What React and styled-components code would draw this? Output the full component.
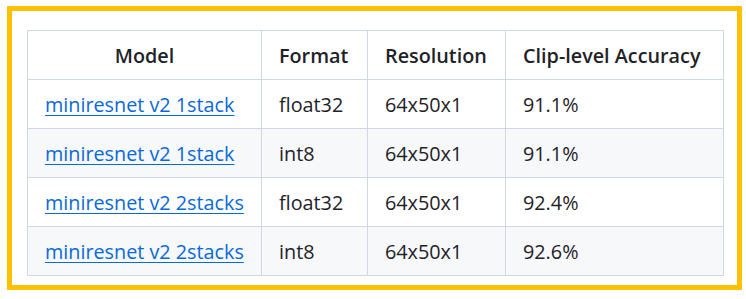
import React from 'react';
import styled, { createGlobalStyle } from 'styled-components';

const GlobalStyle = createGlobalStyle`
  body {
    margin: 0;
    background: #ffffff;
    font-family: "Open Sans", "Noto Sans", sans-serif;
  }
`;

const Frame = styled.div`
  box-sizing: border-box;
  width: 735px;
  height: 284px;
  margin: 6px 0 0 7px;
  border: 5px solid #ffc000;
  padding: 19px 15px 10px 15px;
  background: #ffffff;
`;

const Table = styled.table`
  border-collapse: collapse;
  table-layout: fixed;
  width: 696px;
  color: #1f2328;
  font-size: 19.8px;
`;

const Head = styled.th`
  height: 48px;
  padding: 0 17px;
  border: 1px solid #d0d7de;
  font-weight: 600;
  text-align: ${(p) => (p.center ? 'center' : 'left')};
  white-space: nowrap;
`;

const Row = styled.tr`
  background: ${(p) => (p.striped ? '#f6f8fa' : '#ffffff')};
`;

const Cell = styled.td`
  height: 48px;
  padding: 0 17px;
  border: 1px solid #d0d7de;
  white-space: nowrap;
`;

const Link = styled.a`
  color: #0969da;
  text-decoration: underline;
  text-underline-offset: 3px;
`;

const rows = [
  { model: 'miniresnet v2 1stack', format: 'float32', res: '64x50x1', acc: '91.1%' },
  { model: 'miniresnet v2 1stack', format: 'int8', res: '64x50x1', acc: '91.1%' },
  { model: 'miniresnet v2 2stacks', format: 'float32', res: '64x50x1', acc: '92.4%' },
  { model: 'miniresnet v2 2stacks', format: 'int8', res: '64x50x1', acc: '92.6%' },
];

const App = () => (
  <>
    <GlobalStyle />
    <Frame>
      <Table>
        <colgroup>
          <col style={{ width: 234 }} />
          <col style={{ width: 106 }} />
          <col style={{ width: 138 }} />
          <col style={{ width: 218 }} />
        </colgroup>
        <thead>
          <Row>
            <Head center>Model</Head>
            <Head>Format</Head>
            <Head>Resolution</Head>
            <Head>Clip-level Accuracy</Head>
          </Row>
        </thead>
        <tbody>
          {rows.map((r, i) => (
            <Row key={i} striped={i % 2 === 1}>
              <Cell>
                <Link href="#">{r.model}</Link>
              </Cell>
              <Cell>{r.format}</Cell>
              <Cell>{r.res}</Cell>
              <Cell>{r.acc}</Cell>
            </Row>
          ))}
        </tbody>
      </Table>
    </Frame>
  </>
);

export default App;
